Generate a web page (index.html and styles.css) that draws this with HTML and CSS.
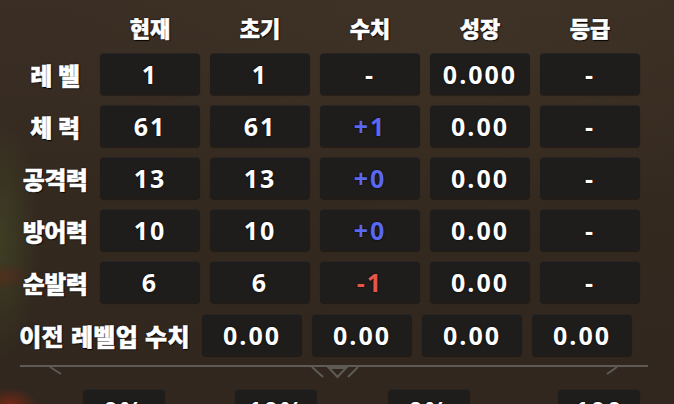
FILE: index.html
```html
<!DOCTYPE html>
<html lang="ko">
<head>
<meta charset="utf-8">
<link rel="stylesheet" href="styles.css">
</head>
<body>
<div class="panel">
  <div class="grid">
    <div class="head"></div>
    <div class="head">현재</div>
    <div class="head">초기</div>
    <div class="head">수치</div>
    <div class="head">성장</div>
    <div class="head">등급</div>

    <div class="label">레 벨</div>
    <div class="cell">1</div>
    <div class="cell">1</div>
    <div class="cell">-</div>
    <div class="cell">0.000</div>
    <div class="cell">-</div>

    <div class="label">체 력</div>
    <div class="cell">61</div>
    <div class="cell">61</div>
    <div class="cell blue">+1</div>
    <div class="cell">0.00</div>
    <div class="cell">-</div>

    <div class="label">공격력</div>
    <div class="cell">13</div>
    <div class="cell">13</div>
    <div class="cell blue">+0</div>
    <div class="cell">0.00</div>
    <div class="cell">-</div>

    <div class="label">방어력</div>
    <div class="cell">10</div>
    <div class="cell">10</div>
    <div class="cell blue">+0</div>
    <div class="cell">0.00</div>
    <div class="cell">-</div>

    <div class="label">순발력</div>
    <div class="cell">6</div>
    <div class="cell">6</div>
    <div class="cell red">-1</div>
    <div class="cell">0.00</div>
    <div class="cell">-</div>
  </div>

  <div class="prev">
    <div class="label wide">이전 레벨업 수치</div>
    <div class="cell">0.00</div>
    <div class="cell">0.00</div>
    <div class="cell">0.00</div>
    <div class="cell">0.00</div>
  </div>

  <svg class="divider" width="674" height="22" viewBox="0 0 674 22">
    <line x1="20" y1="7" x2="648" y2="7" stroke="#5e5b57" stroke-width="2"/>
    <line x1="50" y1="8" x2="61" y2="15" stroke="#5e5b57" stroke-width="2"/>
    <line x1="617" y1="8" x2="607" y2="15" stroke="#5e5b57" stroke-width="2"/>
    <line x1="312" y1="8" x2="323" y2="18" stroke="#5e5b57" stroke-width="2"/>
    <line x1="358" y1="8" x2="348" y2="18" stroke="#5e5b57" stroke-width="2"/>
    <polygon points="329,9 346,9 337.5,18" fill="none" stroke="#5e5b57" stroke-width="2"/>
  </svg>

  <div class="bottom">
    <div class="label small">치 명</div>
    <div class="cell">0%</div>
    <div class="label small">치 피</div>
    <div class="cell">10%</div>
    <div class="label small">관 통</div>
    <div class="cell">0%</div>
    <div class="label small">흡혈도</div>
    <div class="cell">100</div>
  </div>
</div>
</body>
</html>
```

FILE: styles.css
```css
html, body {
  margin: 0;
  padding: 0;
  width: 674px;
  height: 404px;
  overflow: hidden;
}

body {
  background:
    radial-gradient(ellipse 40px 120px at 0px 240px, rgba(70, 80, 40, 0.55), rgba(70, 80, 40, 0) 100%),
    radial-gradient(ellipse 30px 14px at 0px 276px, rgba(90, 25, 20, 0.9), rgba(90, 25, 20, 0) 100%),
    radial-gradient(ellipse 28px 16px at 10px 404px, rgba(120, 40, 20, 0.9), rgba(120, 40, 20, 0) 100%),
    radial-gradient(ellipse 400px 200px at 450px 40px, rgba(70, 55, 40, 0.35), rgba(70, 55, 40, 0) 100%),
    linear-gradient(180deg, #3b2f25 0%, #34291f 50%, #31271e 100%);
  font-family: "Noto Sans CJK KR", "Noto Sans", sans-serif;
  color: #ffffff;
}

.panel {
  padding-top: 11px;
}

.grid {
  display: grid;
  grid-template-columns: 90px repeat(5, 100px);
  grid-template-rows: 32px repeat(5, 42px);
  column-gap: 10px;
  row-gap: 10px;
}

.head {
  display: flex;
  align-items: center;
  justify-content: center;
  font-size: 22px;
  font-weight: 900;
  -webkit-text-stroke: 0.5px #ffffff;
  text-shadow: 0 0 2px #000, 1px 1px 1px #000;
}

.label {
  display: flex;
  align-items: center;
  justify-content: center;
  padding-left: 20px;
  font-size: 24px;
  font-weight: 900;
  white-space: nowrap;
  letter-spacing: -0.5px;
  -webkit-text-stroke: 0.5px #ffffff;
  text-shadow: 0 0 2px #000, 1px 1px 1px #000;
}

.cell {
  display: flex;
  align-items: center;
  justify-content: center;
  background: #1e1d1c;
  border-radius: 4px;
  box-shadow: inset 0 1px 0 rgba(255, 255, 255, 0.04), 0 1px 1px rgba(0, 0, 0, 0.35);
  font-family: "Open Sans", "Noto Sans", sans-serif;
  font-size: 25px;
  font-weight: 700;
  letter-spacing: 2px;
  text-shadow: 0 0 2px #000;
}

.blue {
  color: #5a68f0;
}

.red {
  color: #e5574b;
}

.prev {
  display: grid;
  grid-template-columns: 191px repeat(4, 100px);
  grid-template-rows: 42px;
  column-gap: 10px;
  margin-top: 11px;
  margin-left: 1px;
}

.label.wide {
  padding-left: 16px;
  letter-spacing: 0.3px;
}

.divider {
  display: block;
  margin-top: 3px;
}

.bottom {
  display: grid;
  grid-template-columns: 83px 82px 70px 82px 71px 82px 88px 82px;
  grid-template-rows: 42px;
  margin-top: 8px;
}

.label.small {
  padding-left: 0;
  padding-top: 12px;
  font-size: 21px;
}
```
